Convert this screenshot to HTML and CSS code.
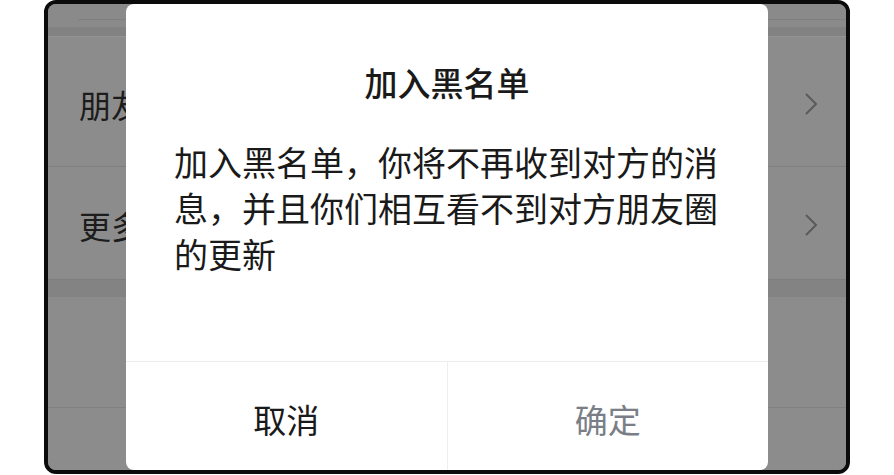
FILE: index.html
```html
<!DOCTYPE html>
<html lang="zh-CN">
<head>
<meta charset="utf-8">
<title>加入黑名单</title>
<link rel="stylesheet" href="styles.css">
</head>
<body>
<div class="page">
  <div class="phone">
    <div class="list">
      <div class="topbar">
        <div class="topbar-line"></div>
        <div class="topbar-band"></div>
      </div>
      <div class="row row-first">
        <span class="row-label">朋友</span>
        <svg class="chev" width="14" height="24" viewBox="0 0 14 24"><path d="M2 2 L12 12 L2 22" fill="none" stroke="#5a5a5a" stroke-width="2"/></svg>
      </div>
      <div class="row row-second">
        <span class="row-label">更多</span>
        <svg class="chev" width="14" height="24" viewBox="0 0 14 24"><path d="M2 2 L12 12 L2 22" fill="none" stroke="#5a5a5a" stroke-width="2"/></svg>
      </div>
      <div class="gap"></div>
      <div class="row row-third"></div>
      <div class="row row-fourth"></div>
    </div>
    <div class="dialog">
      <div class="dialog-title">加入黑名单</div>
      <div class="dialog-body">加入黑名单，你将不再收到对方的消息，并且你们相互看不到对方朋友圈的更新</div>
      <div class="dialog-footer">
        <div class="btn btn-cancel">取消</div>
        <div class="btn btn-ok">确定</div>
      </div>
    </div>
  </div>
</div>
</body>
</html>
```

FILE: styles.css
```css
html, body {
  margin: 0;
  padding: 0;
  background: #ffffff;
}
body {
  font-family: "Noto Sans CJK SC", "Noto Sans", sans-serif;
}
.page {
  width: 894px;
  height: 475px;
  padding-left: 44px;
  box-sizing: border-box;
}
.phone {
  position: relative;
  width: 806px;
  height: 474px;
  box-sizing: border-box;
  border: 4px solid #0b0b0b;
  border-radius: 12px;
  overflow: hidden;
  background: #8b8b8b;
}
.list {
  display: flex;
  flex-direction: column;
  height: 100%;
}
.topbar {
  height: 33px;
  display: flex;
  flex-direction: column;
  background: #8a8a8a;
}
.topbar-line {
  margin-top: 15px;
  height: 1px;
  margin-left: 30px;
  background: #7f7f7f;
}
.topbar-band {
  margin-top: 7px;
  flex: 1;
  background: #828282;
  border-bottom: 1px solid #949494;
}
.row {
  display: flex;
  align-items: center;
  justify-content: space-between;
  padding: 0 28px 0 31px;
  box-sizing: border-box;
  background: #8c8c8c;
}
.row-first {
  height: 130px;
  border-bottom: 1px solid #7f7f7f;
  padding-top: 4px;
}
.row-second {
  height: 112px;
  padding-top: 4px;
}
.gap {
  height: 17px;
  background: #838383;
  border-top: 1px solid #7e7e7e;
}
.row-third {
  height: 111px;
  border-bottom: 1px solid #808080;
}
.row-fourth {
  flex: 1;
}
.row-label {
  display: block;
  white-space: nowrap;
  font-size: 32px;
  color: #1c1c1c;
  line-height: 40px;
}
.chev {
  display: block;
}
.dialog {
  position: absolute;
  left: 78px;
  top: 0;
  width: 642px;
  height: 466px;
  background: #ffffff;
  border-radius: 8px;
  display: flex;
  flex-direction: column;
}
.dialog-title {
  padding-top: 55px;
  line-height: 46px;
  font-size: 33px;
  font-weight: 500;
  color: #1a1a1a;
  text-align: center;
}
.dialog-body {
  margin-top: 34px;
  padding: 0 46px 0 48px;
  font-size: 34px;
  line-height: 46px;
  color: #1a1a1a;
  flex: 1;
}
.dialog-footer {
  height: 108px;
  border-top: 1px solid #ececec;
  display: flex;
}
.btn {
  flex: 1;
  display: flex;
  align-items: center;
  justify-content: center;
  font-size: 33px;
  padding-top: 6px;
}
.btn-cancel {
  color: #1a1a1a;
  border-right: 1px solid #efefef;
}
.btn-ok {
  color: #7a7e86;
}
```
